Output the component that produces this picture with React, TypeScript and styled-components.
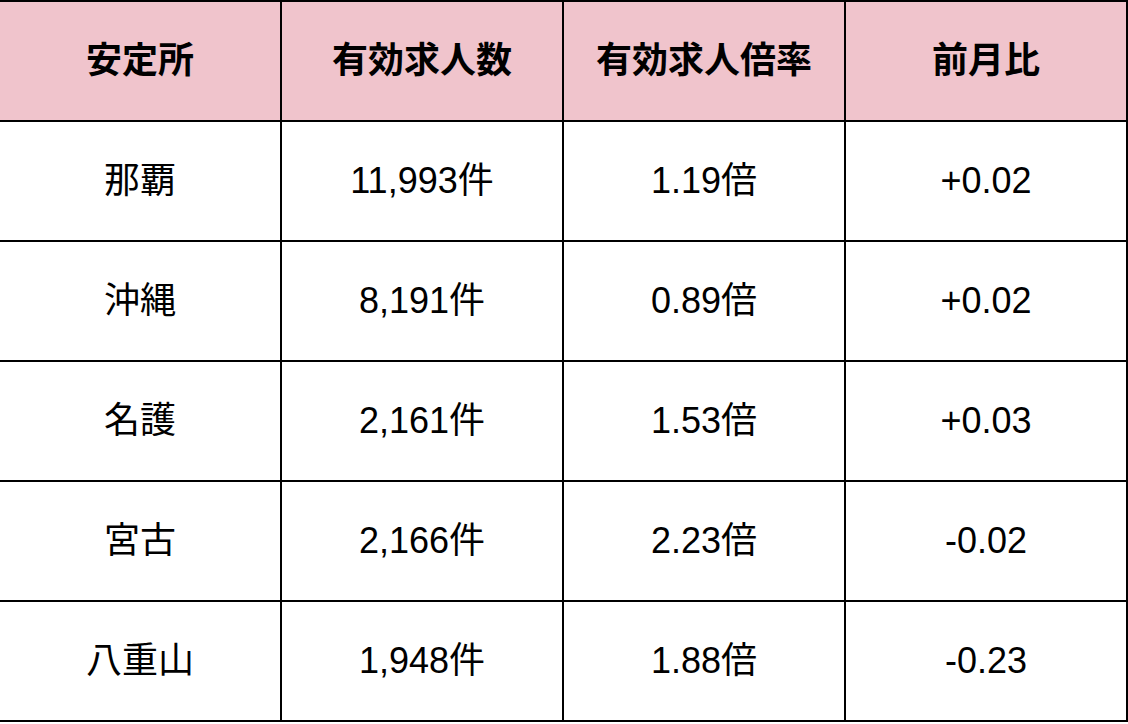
import React from "react";
import styled, { createGlobalStyle } from "styled-components";

const Global = createGlobalStyle`
  html, body { margin: 0; padding: 0; background: #ffffff; overflow: hidden; }
  body { font-family: "Liberation Sans", "Noto Sans CJK JP", sans-serif; }
`;

const Table = styled.div`
  display: grid;
  grid-template-columns: repeat(4, 282px);
  grid-auto-rows: 120px;
  width: 1130px;
  margin-left: -2px;
  border-top: 2px solid #000;
  border-left: 2px solid #000;
  box-sizing: border-box;
`;

const Cell = styled.div<{ $head?: boolean }>`
  box-sizing: border-box;
  border-right: 2px solid #000;
  border-bottom: 2px solid #000;
  padding-bottom: 1px;
  display: flex;
  align-items: center;
  justify-content: center;
  background: ${(p) => (p.$head ? "#f0c4cc" : "#ffffff")};
  color: #000;
  font-family: "Liberation Sans", "Noto Sans CJK JP", sans-serif;
  font-size: 36px;
  line-height: 1;
  font-weight: ${(p) => (p.$head ? 700 : 400)};
  white-space: nowrap;
`;

const headers = ["安定所", "有効求人数", "有効求人倍率", "前月比"];
const rows = [
  ["那覇", "11,993件", "1.19倍", "+0.02"],
  ["沖縄", "8,191件", "0.89倍", "+0.02"],
  ["名護", "2,161件", "1.53倍", "+0.03"],
  ["宮古", "2,166件", "2.23倍", "-0.02"],
  ["八重山", "1,948件", "1.88倍", "-0.23"],
];

export default function App() {
  return (
    <>
      <Global />
      <Table>
        {headers.map((h) => (
          <Cell key={h} $head>
            {h}
          </Cell>
        ))}
        {rows.map((r) =>
          r.map((c, i) => <Cell key={r[0] + i}>{c}</Cell>)
        )}
      </Table>
    </>
  );
}
